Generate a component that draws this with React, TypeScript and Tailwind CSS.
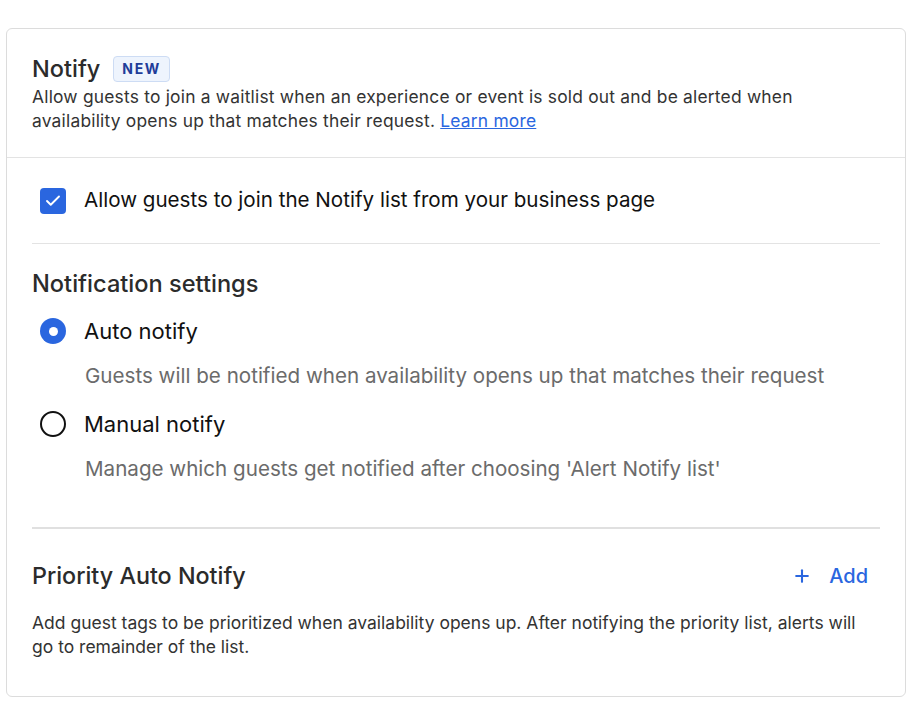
import { Check, Plus } from "lucide-react";

function Radio({ checked }: { checked: boolean }) {
  return checked ? (
    <span className="flex h-[26px] w-[26px] shrink-0 items-center justify-center rounded-full bg-[#2a66df]">
      <span className="h-[9px] w-[9px] rounded-full bg-white" />
    </span>
  ) : (
    <span className="h-[26px] w-[26px] shrink-0 rounded-full border-2 border-[#111]" />
  );
}

function Option({ checked, label, help }: { checked: boolean; label: string; help: string }) {
  return (
    <div>
      <div className="flex h-[28px] items-center gap-[18px] pl-[8px]">
        <Radio checked={checked} />
        <span className="text-[22px] text-[#111]">{label}</span>
      </div>
      <p className="mt-[19px] pl-[53px] text-[20.6px] leading-[24px] text-[#6b6b6b]">{help}</p>
    </div>
  );
}

export default function App() {
  return (
    <div className="min-h-screen bg-white px-[6px] pt-[28px] pb-[9px] font-['Inter',sans-serif]">
      <div className="w-[900px] rounded-[6px] border border-[#dcdcdc] bg-white">
        {/* Kopf */}
        <div className="border-b border-[#e3e3e3] px-[25px] pt-[26px] pb-[24px]">
          <div className="flex items-center gap-[13px]">
            <h1 className="text-[23.5px] font-medium leading-[28px] text-[#2b2b2b]">Notify</h1>
            <span className="rounded-[4px] border border-[#cddcf4] bg-[#eef4fd] px-[8px] text-[14px] font-bold leading-[24px] tracking-[0.12em] text-[#1f3d99]">
              NEW
            </span>
          </div>
          <p className="mt-[2px] max-w-[800px] text-[17.4px] leading-[24px] tracking-[0.012em] text-[#333]">
            Allow guests to join a waitlist when an experience or event is sold out and be alerted when
            availability opens up that matches their request.{" "}
            <a href="#" className="text-[#2a66df] underline">
              Learn more
            </a>
          </p>
        </div>

        <div className="px-[25px]">
          <div className="flex h-[86px] items-center gap-[18px] border-b border-[#e3e3e3] pl-[8px]">
            <span className="flex h-[26px] w-[26px] items-center justify-center rounded-[4px] bg-[#2a66df]">
              <Check className="h-[18px] w-[18px] text-white" strokeWidth={2.5} />
            </span>
            <span className="text-[20.6px] text-[#111]">Allow guests to join the Notify list from your business page</span>
          </div>

          <div className="border-b-2 border-[#e0e0e0] pb-[46px]">
            <h2 className="pt-[26px] text-[23.6px] font-medium leading-[28px] text-[#2b2b2b]">Notification settings</h2>
            <div className="mt-[19px] flex flex-col gap-[22px]">
              <Option
                checked
                label="Auto notify"
                help="Guests will be notified when availability opens up that matches their request"
              />
              <Option
                checked={false}
                label="Manual notify"
                help="Manage which guests get notified after choosing 'Alert Notify list'"
              />
            </div>
          </div>

          <div className="pt-[32px] pb-[37px]">
            <div className="flex items-center justify-between">
              <h2 className="text-[23.3px] font-medium leading-[28px] text-[#2b2b2b]">Priority Auto Notify</h2>
              <button className="mr-[12px] flex items-center gap-[17px] text-[20px] font-medium text-[#2a66df]">
                <Plus className="h-[20px] w-[20px]" strokeWidth={2.5} />
                Add
              </button>
            </div>
            <p className="mt-[20px] text-[17.5px] leading-[24px] text-[#333]">
              Add guest tags to be prioritized when availability opens up. After notifying the priority list, alerts will
              go to remainder of the list.
            </p>
          </div>
        </div>
      </div>
    </div>
  );
}
